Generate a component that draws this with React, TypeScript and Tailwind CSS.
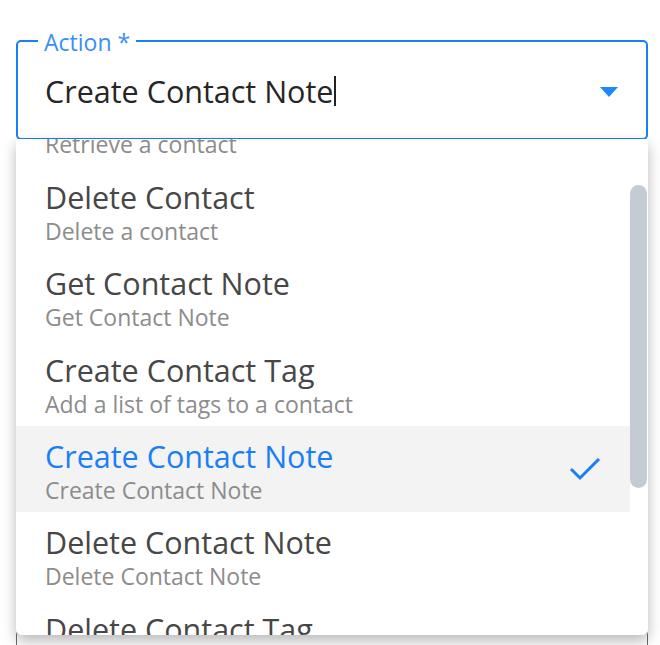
import React from 'react';

interface ActionOption {
  title: string;
  description: string;
}

const options: ActionOption[] = [
  { title: 'Get Contact', description: 'Retrieve a contact' },
  { title: 'Delete Contact', description: 'Delete a contact' },
  { title: 'Get Contact Note', description: 'Get Contact Note' },
  { title: 'Create Contact Tag', description: 'Add a list of tags to a contact' },
  { title: 'Create Contact Note', description: 'Create Contact Note' },
  { title: 'Delete Contact Note', description: 'Delete Contact Note' },
  { title: 'Delete Contact Tag', description: 'Delete Contact Tag' },
];

const selected = 'Create Contact Note';

export default function App() {
  return (
    <div
      className="relative w-[660px] h-[645px] overflow-hidden bg-white"
      style={{ fontFamily: '"Open Sans", "Noto Sans", sans-serif' }}
    >
      <div className="pt-[40px] pl-[16px] pr-[12px]">
        {/* Select field */}
        <div className="relative h-[100px] rounded-[5px] border-2 border-[#1a7ff5]">
          <span className="absolute -top-[14px] left-[20px] bg-white px-[6px] text-[23px] leading-[28px] text-[#3a8ef6]">
            Action *
          </span>
          <div className="flex h-full items-center pl-[27px] pr-[28px] pt-[1px]">
            <span className="text-[30.5px] leading-[38px] text-[#262626]">{selected}</span>
            <span className="ml-[1px] h-[30px] w-[2px] bg-[#222]" />
            <div className="flex-1" />
            <svg width="18" height="10" viewBox="0 0 18 10" className="mt-[2px]">
              <path d="M0 0h18L9 10z" fill="#1e88fb" />
            </svg>
          </div>
        </div>

        {/* Next field underneath */}
        <div className="mt-[490px] h-[60px] rounded-[5px] border border-[#6b6b6b]" />
      </div>

      {/* Dropdown menu */}
      <div className="absolute left-[16px] top-[139px] flex h-[496px] w-[632px] overflow-hidden rounded-b-[6px] bg-white shadow-[0_6px_14px_rgba(0,0,0,0.28)]">
        <div className="flex-1 overflow-hidden">
          <div className="-mt-[58.6px]">
            {options.map((o) => {
              const isSel = o.title === selected;
              return (
                <div
                  key={o.title}
                  className={`flex h-[86.4px] items-start pl-[29px] pr-[28px] pt-[12px] ${isSel ? 'bg-[#f3f3f3]' : ''}`}
                >
                  <div className="flex-1 whitespace-nowrap">
                    <div className={`text-[30.5px] leading-[36px] ${isSel ? 'text-[#1a7ff5]' : 'text-[#474747]'}`}>
                      {o.title}
                    </div>
                    <div className="mt-[2px] text-[23px] leading-[28px] text-[#8c8c8c]">{o.description}</div>
                  </div>
                  {isSel && (
                    <svg width="32" height="24" viewBox="0 0 32 24" className="mt-[20px] mr-[1px]">
                      <polyline
                        points="2,11 11,20 30,1"
                        fill="none"
                        stroke="#1a7ff5"
                        strokeWidth="3"
                      />
                    </svg>
                  )}
                </div>
              );
            })}
          </div>
        </div>
        <div className="w-[18px] pt-[46px]">
          <div className="h-[303px] w-[17px] rounded-full bg-[#c4cbd3]" />
        </div>
      </div>
    </div>
  );
}
